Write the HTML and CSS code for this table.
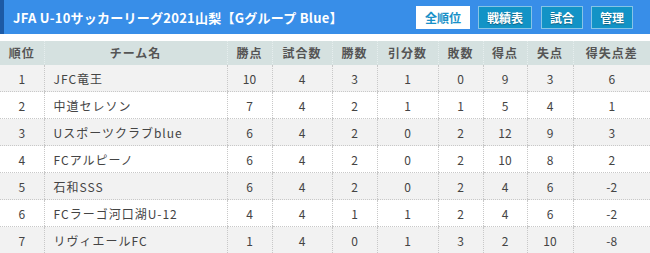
FILE: index.html
```html
<!DOCTYPE html>
<html lang="ja">
<head>
<meta charset="utf-8">
<title>順位表</title>
<link rel="stylesheet" href="styles.css">
</head>
<body>
<div class="bar">
  <h1 class="title">JFA U-10サッカーリーグ2021山梨【Gグループ Blue】</h1>
  <div class="btns">
    <span class="btn active">全順位</span>
    <span class="btn">戦績表</span>
    <span class="btn">試合</span>
    <span class="btn">管理</span>
  </div>
</div>
<table class="standings">
  <colgroup>
    <col style="width:44px"><col style="width:183px"><col style="width:45px"><col style="width:60px"><col style="width:45px"><col style="width:61px"><col style="width:45px"><col style="width:44px"><col style="width:46px"><col>
  </colgroup>
  <thead>
    <tr><th>順位</th><th>チーム名</th><th>勝点</th><th>試合数</th><th>勝数</th><th>引分数</th><th>敗数</th><th>得点</th><th>失点</th><th>得失点差</th></tr>
  </thead>
  <tbody>
    <tr><td>1</td><td class="team">JFC竜王</td><td>10</td><td>4</td><td>3</td><td>1</td><td>0</td><td>9</td><td>3</td><td>6</td></tr>
    <tr><td>2</td><td class="team">中道セレソン</td><td>7</td><td>4</td><td>2</td><td>1</td><td>1</td><td>5</td><td>4</td><td>1</td></tr>
    <tr><td>3</td><td class="team">Uスポーツクラブblue</td><td>6</td><td>4</td><td>2</td><td>0</td><td>2</td><td>12</td><td>9</td><td>3</td></tr>
    <tr><td>4</td><td class="team">FCアルピーノ</td><td>6</td><td>4</td><td>2</td><td>0</td><td>2</td><td>10</td><td>8</td><td>2</td></tr>
    <tr><td>5</td><td class="team">石和SSS</td><td>6</td><td>4</td><td>2</td><td>0</td><td>2</td><td>4</td><td>6</td><td>-2</td></tr>
    <tr><td>6</td><td class="team">FCラーゴ河口湖U-12</td><td>4</td><td>4</td><td>1</td><td>1</td><td>2</td><td>4</td><td>6</td><td>-2</td></tr>
    <tr><td>7</td><td class="team">リヴィエールFC</td><td>1</td><td>4</td><td>0</td><td>1</td><td>3</td><td>2</td><td>10</td><td>-8</td></tr>
  </tbody>
</table>
</body>
</html>
```
FILE: styles.css
```css
html, body {
  margin: 0;
  padding: 0;
  background: #fff;
  font-family: "Noto Sans CJK JP", "Noto Sans", sans-serif;
}
.bar {
  height: 34px;
  box-sizing: border-box;
  background: #388ee8;
  border-left: 4px solid #1c5aa6;
  display: flex;
  align-items: center;
  justify-content: space-between;
  padding: 0 17px 0 9px;
}
.title {
  margin: 0;
  font-size: 13px;
  font-weight: bold;
  color: #fff;
  letter-spacing: 0.25px;
  line-height: 1;
}
.btns {
  display: flex;
  gap: 8px;
  margin-top: 1px;
}
.btn {
  display: block;
  height: 23px;
  box-sizing: border-box;
  padding: 0 8px;
  line-height: 21px;
  font-size: 12px;
  font-weight: bold;
  color: #fff;
  background: #1293c6;
  border: 1px solid #86c4e6;
  text-shadow: 0 1px 1px rgba(0,0,0,0.35);
}
.btn.active {
  background: #fff;
  color: #1890c8;
  border-color: #fff;
  text-shadow: none;
}
.btns .btn:nth-child(2) { margin-right: 1px; }
.standings {
  margin-top: 7px;
  width: 650px;
  border-collapse: collapse;
  table-layout: fixed;
  font-size: 12px;
  color: #444;
}
.standings th {
  height: 23px;
  padding: 0;
  background: #d5e1e0;
  color: #555;
  font-weight: bold;
  letter-spacing: 1px;
  border-left: 1px dotted #e6eeee;
  border-bottom: 1px solid #d5e1e0;
}
.standings th:first-child { border-left: none; }
.standings td {
  height: 26px;
  padding: 0;
  text-align: center;
  border-left: 1px dotted #c8c8c8;
  border-bottom: 1px dotted #c8c8c8;
}
.standings td:first-child { border-left: none; }
.standings tbody tr:nth-child(odd) td { background: #f2f2f2; }
.standings td.team {
  text-align: left;
  padding-left: 9px;
  letter-spacing: 1px;
}
```
